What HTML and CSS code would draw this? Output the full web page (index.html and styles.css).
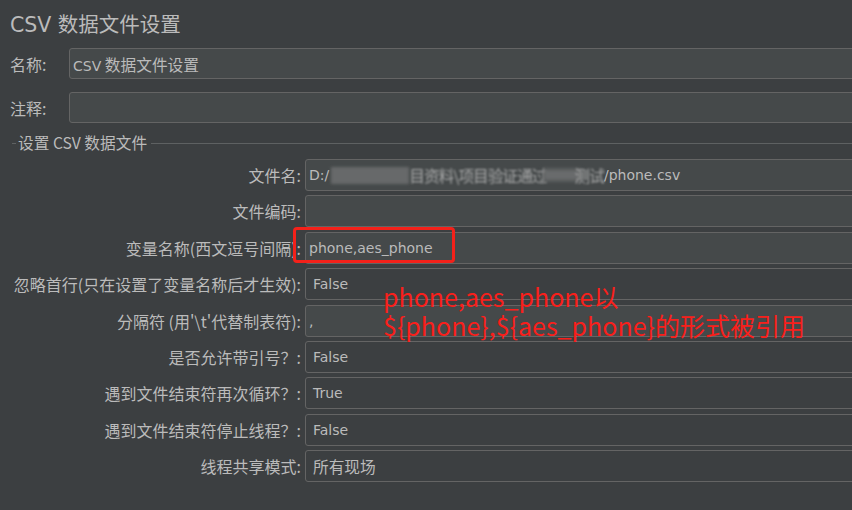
FILE: index.html
```html
<!DOCTYPE html>
<html lang="zh-CN">
<head>
<meta charset="utf-8">
<title>CSV 数据文件设置</title>
<link rel="stylesheet" href="styles.css">
</head>
<body>
<div class="page">
  <h1 class="title">CSV 数据文件设置</h1>

  <div class="top-row name-row">
    <label class="top-label">名称:</label>
    <div class="field text"><span class="val"><span class="lat">CSV</span> <span class="cjk">数据文件设置</span></span></div>
  </div>
  <div class="top-row comment-row">
    <label class="top-label">注释:</label>
    <div class="field text"></div>
  </div>

  <div class="legend"><span class="legend-text">设置 CSV 数据文件</span></div>

  <div class="csv-grid">
    <label class="lbl">文件名:</label>
    <div class="field text"><span class="lat">D:/</span><span class="blur-block"></span><span class="smudge cjk">目资料\项目验证通过</span><span class="smudge-gray"></span><span class="smudge cjk">测试</span><span class="lat">/phone.csv</span></div>

    <label class="lbl">文件编码:</label>
    <div class="field text"></div>

    <label class="lbl">变量名称(西文逗号间隔):</label>
    <div class="field text highlight-host"><span class="lat">phone,aes_phone</span><span class="red-box"></span></div>

    <label class="lbl">忽略首行(只在设置了变量名称后才生效):</label>
    <div class="field combo"><span class="lat">False</span></div>

    <label class="lbl">分隔符 (用'\t'代替制表符):</label>
    <div class="field text"><span class="lat">,</span></div>

    <label class="lbl">是否允许带引号？:</label>
    <div class="field combo"><span class="lat">False</span></div>

    <label class="lbl">遇到文件结束符再次循环？:</label>
    <div class="field combo"><span class="lat">True</span></div>

    <label class="lbl">遇到文件结束符停止线程？:</label>
    <div class="field combo"><span class="lat">False</span></div>

    <label class="lbl">线程共享模式:</label>
    <div class="field combo"><span class="cjk">所有现场</span></div>
  </div>

  <div class="note">phone,aes_phone以<br>${phone},${aes_phone}的形式被引用</div>
</div>
</body>
</html>
```

FILE: styles.css
```css
html, body {
  margin: 0;
  padding: 0;
  background: #3c3f41;
  overflow: hidden;
}

.page {
  position: relative;
  width: 1000px;
  height: 510px;
  padding: 0 0 0 8px;
  box-sizing: border-box;
  color: #bbbbbb;
  font-family: "Noto Sans CJK SC", sans-serif;
}

.title {
  margin: 0;
  padding: 12px 0 0 2px;
  height: 37px;
  box-sizing: border-box;
  font-family: "DejaVu Sans", "Noto Sans CJK SC", sans-serif;
  font-weight: normal;
  font-size: 20.5px;
  line-height: 26px;
  color: #bbbbbb;
}

.top-row {
  display: flex;
  align-items: center;
  height: 31px;
}

.name-row { margin-top: 11px; }
.comment-row { margin-top: 13px; }

.top-label {
  width: 61px;
  padding-left: 2px;
  box-sizing: border-box;
  font-size: 16px;
  line-height: 20px;
}

.top-row .field {
  flex: 1;
  height: 31px;
}

.field {
  display: flex;
  align-items: center;
  box-sizing: border-box;
  height: 32px;
  border: 1px solid #646464;
  border-radius: 3px;
  white-space: nowrap;
  color: #bbbbbb;
}

.field.text {
  background: #45494a;
  padding-left: 3px;
}

.field.combo {
  background: #3c3f41;
  padding-left: 7px;
}

.lat {
  font-family: "DejaVu Sans", sans-serif;
  font-size: 14px;
}

.cjk {
  font-family: "Noto Sans CJK SC", sans-serif;
  font-size: 15.7px;
}

.val {
  white-space: pre;
}

.legend {
  display: flex;
  align-items: center;
  height: 20px;
  margin-top: 10px;
  margin-left: 4px;
}

.legend::before {
  content: "";
  width: 4px;
  border-top: 1px solid #5e6162;
  margin-right: 2px;
}

.legend::after {
  content: "";
  flex: 1;
  border-top: 1px solid #5e6162;
  margin-left: 4px;
}

.legend-text {
  font-size: 15.7px;
  line-height: 20px;
}

.csv-grid {
  display: grid;
  grid-template-columns: 293px 1fr;
  column-gap: 4px;
  row-gap: 4.4px;
  margin-top: 6px;
}

.lbl {
  align-self: center;
  text-align: right;
  font-size: 16px;
  line-height: 20px;
  white-space: nowrap;
}

.blur-block {
  display: inline-block;
  width: 78px;
  height: 17px;
  margin-left: 2px;
  background: #67696a;
  filter: blur(1.5px);
}

.smudge {
  filter: blur(0.9px);
  opacity: 0.85;
  letter-spacing: -1px;
}

.smudge-gray {
  display: inline-block;
  width: 38px;
  height: 12px;
  background: #696b6c;
  filter: blur(2px);
  margin: 0 -6px 0 -4px;
}

.highlight-host {
  position: relative;
}

.red-box {
  position: absolute;
  left: -13px;
  top: -6px;
  width: 162px;
  height: 36px;
  border: 3px solid #f4211a;
  border-radius: 4px;
  box-sizing: border-box;
}

.note {
  position: absolute;
  left: 383px;
  top: 282px;
  font-family: "Noto Sans CJK SC", sans-serif;
  font-size: 25px;
  line-height: 29px;
  color: #f91f1b;
  white-space: nowrap;
}
```
